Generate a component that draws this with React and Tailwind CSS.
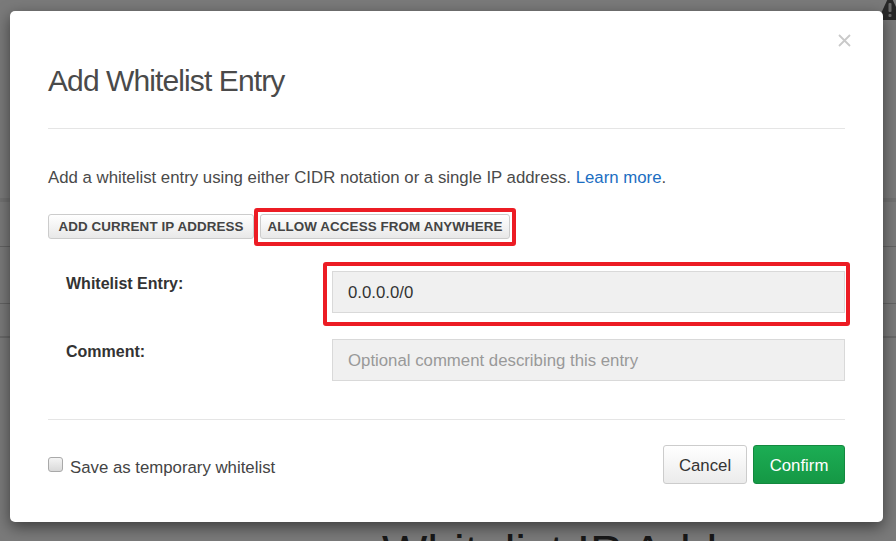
import React from "react";

const Field = ({ label, value, placeholder, marked }) => (
    <div className="flex items-start">
        <label className="w-[284px] pl-[18px] pt-[1px] text-[16px] leading-[24px] font-bold text-[#333]">{label}</label>
        <div className="relative flex-1">
            {marked && (
                <span className="absolute -left-[9px] -right-[5px] -top-[9px] -bottom-[13px] border-4 border-[#ec1c24] rounded-[3px]" />
            )}
            <input
                readOnly
                value={value}
                placeholder={placeholder}
                className="relative block w-full h-[42px] px-[15px] pt-[1px] bg-[#f0f0f0] border border-[#d9d9d9] text-[16.8px] text-[#333] placeholder:text-[#999] outline-none"
            />
        </div>
    </div>
);

const App = () => {
    return (
        <div className="relative w-[896px] h-[541px] overflow-hidden bg-white font-['Liberation_Sans',Arial,sans-serif]">
            {/* page underneath the dialog */}
            <div className="flex flex-col">
                <div className="flex justify-end h-[198px]">
                    <svg width="24" height="26" viewBox="0 0 24 26" className="-mt-[6px] -mr-[6px]">
                        <polygon points="12,0 24,26 0,26" fill="#555" />
                        <rect x="10.5" y="9" width="3" height="9" rx="1" fill="#ddd" />
                        <rect x="10.5" y="20" width="3" height="3" rx="1" fill="#ddd" />
                    </svg>
                </div>
                <div className="h-[4px] bg-[#ececec]" />
                <div className="h-[44px]" />
                <div className="h-px bg-[#cfcfcf]" />
                <div className="h-[56px]" />
                <div className="h-px bg-[#cfcfcf]" />
                <div className="h-[32px]" />
                <div className="h-[2px] bg-[#dcdcdc]" />
                <div className="h-[191px]" />
                <h2 className="pl-[382px] text-[48px] leading-none text-[#333]">Whitelist IP Addresses</h2>
            </div>

            <div className="absolute inset-0 bg-black/[0.52]" />

            {/* dialog */}
            <div className="absolute left-[10px] top-[11px] w-[873px] bg-white rounded-[5px] shadow-[0_5px_15px_rgba(0,0,0,0.5)] px-[38px] pt-[52px] pb-[38px]">
                <button className="absolute top-[23px] right-[32px] w-[13px] h-[13px]">
                    <svg viewBox="0 0 13 13" width="13" height="13">
                        <path d="M1 1L12 12M12 1L1 12" stroke="#c9c9c9" strokeWidth="1.8" />
                    </svg>
                </button>

                <h1 className="text-[30px] leading-[36px] tracking-[-0.9px] text-[#4a4a4a]">Add Whitelist Entry</h1>
                <div className="mt-[29px] h-px bg-[#e5e5e5]" />

                <p className="mt-[37px] text-[16.8px] leading-[24px] text-[#4a4a4a]">
                    Add a whitelist entry using either CIDR notation or a single IP address.{" "}
                    <a className="text-[#1b6ec2]">Learn more</a>.
                </p>

                <div className="mt-[24px] flex gap-[6px]">
                    <button className="h-[25px] w-[206px] pt-[2px] border border-[#ccc] rounded-[3px] bg-linear-to-b from-white to-[#e8e8e8] text-[13.4px] font-bold tracking-[0.1px] text-[#444]">
                        ADD CURRENT IP ADDRESS
                    </button>
                    <span className="relative">
                        <span className="absolute -left-[6px] -right-[6px] -top-[6px] -bottom-[7px] border-4 border-[#ec1c24] rounded-[3px]" />
                        <button className="relative h-[25px] w-[250px] pt-[2px] border border-[#ccc] rounded-[3px] bg-linear-to-b from-white to-[#e8e8e8] text-[13.4px] font-bold tracking-[0.1px] text-[#444]">
                            ALLOW ACCESS FROM ANYWHERE
                        </button>
                    </span>
                </div>

                <div className="mt-[32px] flex flex-col gap-[26px]">
                    <Field label="Whitelist Entry:" value="0.0.0.0/0" marked />
                    <Field label="Comment:" value="" placeholder="Optional comment describing this entry" />
                </div>

                <div className="mt-[38px] h-px bg-[#e5e5e5]" />

                <div className="mt-[25px] flex items-start justify-between">
                    <label className="flex items-start gap-[7px] pt-[11px]">
                        <span className="mt-[1px] w-[15px] h-[15px] rounded-[3px] border border-[#a9a9a9] bg-linear-to-b from-[#f4f4f4] to-[#d9d9d9]" />
                        <span className="text-[16.8px] leading-[24px] text-[#444]">Save as temporary whitelist</span>
                    </label>
                    <div className="flex gap-[6px]">
                        <button className="h-[39px] w-[84px] pt-[3px] border border-[#ccc] rounded-[3px] bg-linear-to-b from-white to-[#ebebeb] text-[16.8px] text-[#333]">
                            Cancel
                        </button>
                        <button className="h-[39px] w-[92px] pt-[3px] border border-[#13893f] rounded-[3px] bg-linear-to-b from-[#1cad54] to-[#159845] text-[16.8px] text-white">
                            Confirm
                        </button>
                    </div>
                </div>
            </div>
        </div>
    );
};

export default App;
